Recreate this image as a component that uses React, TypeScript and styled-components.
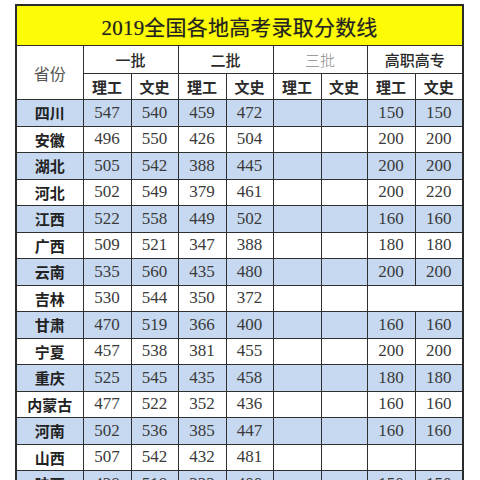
import styled, { createGlobalStyle } from "styled-components";

type Row = {
  name: string;
  scores: string[];
  vocational?: [string, string];
};

const rows: Row[] = [
  { name: "四川", scores: ["547", "540", "459", "472"], vocational: ["150", "150"] },
  { name: "安徽", scores: ["496", "550", "426", "504"], vocational: ["200", "200"] },
  { name: "湖北", scores: ["505", "542", "388", "445"], vocational: ["200", "200"] },
  { name: "河北", scores: ["502", "549", "379", "461"], vocational: ["200", "220"] },
  { name: "江西", scores: ["522", "558", "449", "502"], vocational: ["160", "160"] },
  { name: "广西", scores: ["509", "521", "347", "388"], vocational: ["180", "180"] },
  { name: "云南", scores: ["535", "560", "435", "480"], vocational: ["200", "200"] },
  { name: "吉林", scores: ["530", "544", "350", "372"] },
  { name: "甘肃", scores: ["470", "519", "366", "400"], vocational: ["160", "160"] },
  { name: "宁夏", scores: ["457", "538", "381", "455"], vocational: ["200", "200"] },
  { name: "重庆", scores: ["525", "545", "435", "458"], vocational: ["180", "180"] },
  { name: "内蒙古", scores: ["477", "522", "352", "436"], vocational: ["160", "160"] },
  { name: "河南", scores: ["502", "536", "385", "447"], vocational: ["160", "160"] },
  { name: "山西", scores: ["507", "542", "432", "481"], vocational: ["", ""] },
  { name: "陕西", scores: ["438", "518", "333", "400"], vocational: ["150", "150"] },
];

const widths = [67, 48, 47, 48, 47, 48, 46, 48, 48];

export default function App() {
  return (
    <>
      <GlobalStyle />
      <Page>
        <Table>
          <colgroup>
            {widths.map((w, i) => (
              <col key={i} style={{ width: w }} />
            ))}
          </colgroup>
          <tbody>
            <tr>
              <TitleCell colSpan={9}>2019全国各地高考录取分数线</TitleCell>
            </tr>
            <HeadRow>
              <ProvinceHead rowSpan={2}>省份</ProvinceHead>
              <BatchCell colSpan={2}>一批</BatchCell>
              <BatchCell colSpan={2}>二批</BatchCell>
              <BatchCell colSpan={2} $muted>
                三批
              </BatchCell>
              <BatchCell colSpan={2}>高职高专</BatchCell>
            </HeadRow>
            <SubRow>
              {[0, 1, 2, 3].map((i) => (
                <>
                  <SubCell key={`l${i}`}>理工</SubCell>
                  <SubCell key={`w${i}`}>文史</SubCell>
                </>
              ))}
            </SubRow>
            {rows.map((r, i) => (
              <DataRow key={r.name} $blue={i % 2 === 0}>
                <ProvinceCell>{r.name}</ProvinceCell>
                {r.scores.map((s, j) => (
                  <NumCell key={j}>{s}</NumCell>
                ))}
                <NumCell />
                <NumCell />
                {r.vocational ? (
                  <>
                    <NumCell>{r.vocational[0]}</NumCell>
                    <NumCell>{r.vocational[1]}</NumCell>
                  </>
                ) : (
                  <NumCell colSpan={2} />
                )}
              </DataRow>
            ))}
          </tbody>
        </Table>
      </Page>
    </>
  );
}

const GlobalStyle = createGlobalStyle`
  html, body {
    margin: 0;
    padding: 0;
    background: #ffffff;
  }
  body {
    width: 480px;
    height: 480px;
    overflow: hidden;
  }
`;

const Page = styled.div`
  padding: 4px 0 0 15px;
  width: 480px;
  box-sizing: border-box;
`;

const Table = styled.table`
  width: 447px;
  table-layout: fixed;
  border-collapse: collapse;
  border: 2px solid #2b2b2b;
  font-family: "Liberation Serif", "Noto Sans CJK SC", serif;
  color: #2e2e2e;

  td {
    border: 1.5px solid #2f2f2f;
    padding: 0;
    text-align: center;
    vertical-align: middle;
    overflow: hidden;
    white-space: nowrap;
  }
`;

const TitleCell = styled.td`
  height: 39px;
  background: #fdfc06;
  font-size: 21px;
  color: #222;
  letter-spacing: 0.2px;
  text-shadow: 0 0 1px rgba(60, 50, 0, 0.45);
`;

const HeadRow = styled.tr`
  height: 28px;
  background: #ffffff;
`;

const ProvinceHead = styled.td`
  font-family: "Noto Sans CJK SC", sans-serif;
  font-size: 16px;
  font-weight: 400;
  color: #555;
`;

const BatchCell = styled.td<{ $muted?: boolean }>`
  font-family: "Noto Sans CJK SC", sans-serif;
  font-size: 15px;
  font-weight: ${(p) => (p.$muted ? 300 : 500)};
  color: ${(p) => (p.$muted ? "#8a8a8a" : "#2a2a2a")};
`;

const SubRow = styled.tr`
  height: 26px;
  background: #ffffff;
`;

const SubCell = styled.td`
  font-family: "Noto Sans CJK SC", sans-serif;
  font-size: 15px;
  font-weight: 700;
  color: #2a2a2a;
`;

const DataRow = styled.tr<{ $blue: boolean }>`
  height: 26.5px;
  background: ${(p) => (p.$blue ? "#c6d9f1" : "#ffffff")};
`;

const ProvinceCell = styled.td`
  font-family: "Noto Sans CJK SC", sans-serif;
  font-size: 15px;
  font-weight: 700;
  color: #222;
`;

const NumCell = styled.td`
  font-size: 17px;
  color: #3a3a3a;
`;
